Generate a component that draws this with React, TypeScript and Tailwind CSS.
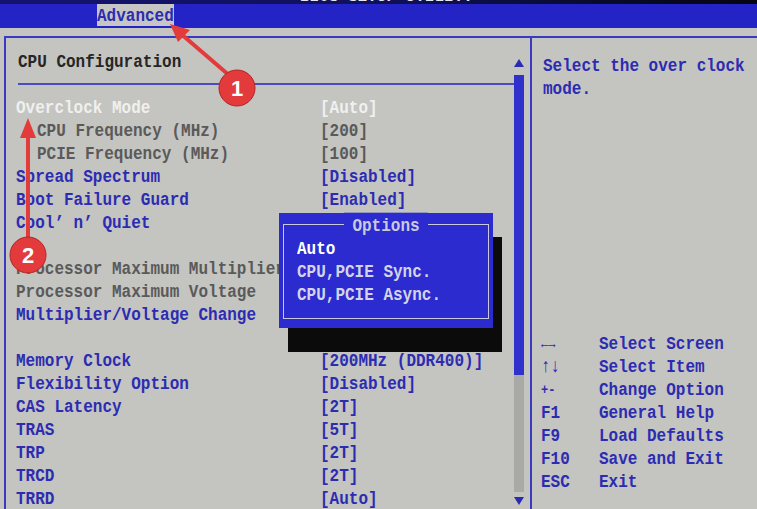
import React from "react";

type Tone = "hi" | "dim" | "blue" | "blank";

type Row = {
  label?: string;
  value?: string;
  tone: Tone;
  indent?: boolean;
};

const rows: Row[] = [
  { label: "Overclock Mode", value: "[Auto]", tone: "hi" },
  { label: "CPU Frequency (MHz)", value: "[200]", tone: "dim", indent: true },
  { label: "PCIE Frequency (MHz)", value: "[100]", tone: "dim", indent: true },
  { label: "Spread Spectrum", value: "[Disabled]", tone: "blue" },
  { label: "Boot Failure Guard", value: "[Enabled]", tone: "blue" },
  { label: "Cool\u2019 n\u2019 Quiet", tone: "blue" },
  { tone: "blank" },
  { label: "Processor Maximum Multiplier", tone: "dim" },
  { label: "Processor Maximum Voltage", tone: "dim" },
  { label: "Multiplier/Voltage Change", tone: "blue" },
  { tone: "blank" },
  { label: "Memory Clock", value: "[200MHz (DDR400)]", tone: "blue" },
  { label: "Flexibility Option", value: "[Disabled]", tone: "blue" },
  { label: "CAS Latency", value: "[2T]", tone: "blue" },
  { label: "TRAS", value: "[5T]", tone: "blue" },
  { label: "TRP", value: "[2T]", tone: "blue" },
  { label: "TRCD", value: "[2T]", tone: "blue" },
  { label: "TRRD", value: "[Auto]", tone: "blue" },
];

const keys = [
  ["\u2190\u2192", "Select Screen", true],
  ["\u2191\u2193", "Select Item", false],
  ["+-", "Change Option", true],
  ["F1", "General Help", false],
  ["F9", "Load Defaults", false],
  ["F10", "Save and Exit", false],
  ["ESC", "Exit", false],
] as const;

const toneClass: Record<Tone, string> = {
  hi: "text-[#f0f0ee]",
  dim: "text-[#5a5a5a]",
  blue: "text-[#2c2cb2]",
  blank: "",
};

function Line({ children, className = "" }: { children?: React.ReactNode; className?: string }) {
  return (
    <div className={`h-[23px] leading-[23px] whitespace-nowrap scale-y-[1.2] ${className}`}>
      {children}
    </div>
  );
}

function SettingRow({ row }: { row: Row }) {
  if (row.tone === "blank") return <div className="h-[23px]" />;
  return (
    <div className={`grid grid-cols-[304px_1fr] ${toneClass[row.tone]}`}>
      <Line className={row.indent ? "pl-[21px]" : ""}>{row.label}</Line>
      <Line>{row.value}</Line>
    </div>
  );
}

function OptionsPopup() {
  return (
    <div className="absolute left-[279px] top-[213px] w-[214px] h-[115px] bg-[#2b2bd0] shadow-[9px_24px_0_0_#0b0b0b] px-[4px] pt-[11px]">
      <div className="relative h-[95px] border border-[#c9c9dc]">
        <div className="flex justify-center -mt-[10px]">
          <Line className="bg-[#2b2bd0] px-[8px] text-[#c9c9dc]">Options</Line>
        </div>
        <div className="pl-[13px] text-[#d4d4e6]">
          <Line className="font-extrabold text-white">Auto</Line>
          <Line>CPU,PCIE Sync.</Line>
          <Line>CPU,PCIE Async.</Line>
        </div>
      </div>
    </div>
  );
}

function Markers() {
  return (
    <svg className="absolute inset-0 pointer-events-none" width="757" height="509" viewBox="0 0 757 509">
      <g stroke="#e33b3b" strokeWidth="4" strokeLinecap="round">
        <line x1="230" y1="76" x2="180" y2="33" />
        <line x1="28" y1="240" x2="28" y2="134" />
      </g>
      <g fill="#e33b3b">
        <polygon points="170,24 190,30 178,42" />
        <polygon points="28,118 36,138 20,138" />
      </g>
      <g fill="#e33b3b" stroke="#b52424" strokeWidth="1">
        <circle cx="237" cy="88" r="18" />
        <circle cx="28" cy="255" r="18" />
      </g>
      <g fill="#ffffff" fontFamily="'Liberation Sans', Arial, sans-serif" fontWeight="700" fontSize="22" textAnchor="middle">
        <text x="237" y="96">1</text>
        <text x="28" y="263">2</text>
      </g>
    </svg>
  );
}

export default function App() {
  return (
    <div className="relative w-[757px] h-[509px] overflow-hidden bg-[#c4c4c1] text-[16px] font-bold font-['Liberation_Mono',monospace]">
      {/* title strip, mostly cropped off */}
      <div className="h-[4px] overflow-hidden bg-gradient-to-r from-[#141470] via-[#10105a] to-[#050510]">
        <div className="pl-[300px] -mt-[11px] leading-[16px] text-[#e8e8f0] whitespace-nowrap">BIOS SETUP UTILITY</div>
      </div>

      {/* menu bar */}
      <div className="h-[24px] bg-[#2424c6] flex">
        <div className="ml-[97px] w-[77px] h-[22px] bg-[#c6c6c4] text-[#2c2cb2]">
          <Line className="leading-[24px] h-[22px]">Advanced</Line>
        </div>
      </div>

      <div className="h-[8px]" />

      {/* main frame */}
      <div className="ml-[4px] h-[473px] border-l-2 border-t-2 border-[#3a3ac0] flex">
        <div className="w-[524px] flex">
          <div className="flex-1 pl-[10px]">
            <div className="pt-[13px] pl-[2px] text-[#262626]">
              <Line>CPU Configuration</Line>
            </div>
            <div className="mt-[9px] ml-[2px] h-[2px] bg-[#4b4bc4]" />
            <div className="mt-[12px]">
              {rows.map((r, i) => (
                <SettingRow key={i} row={r} />
              ))}
            </div>
          </div>

          {/* scrollbar */}
          <div className="w-[10px] flex flex-col items-center">
            <svg className="mt-[21px]" width="10" height="8" viewBox="0 0 10 8">
              <polygon points="5,0 10,8 0,8" fill="#2a2ab4" />
            </svg>
            <div className="mt-[8px] w-[10px] h-[300px] bg-[#3030cc]" />
            <div className="w-[10px] h-[117px] bg-[#a9a9a6]" />
            <svg className="mt-[5px]" width="10" height="8" viewBox="0 0 10 8">
              <polygon points="0,0 10,0 5,8" fill="#2a2ab4" />
            </svg>
          </div>
          <div className="w-[6px]" />
        </div>

        {/* help column */}
        <div className="flex-1 border-l-2 border-[#3a3ac0] flex flex-col justify-between pb-[15px] text-[#2c2cb2]">
          <div className="pt-[17px] pl-[11px]">
            <Line>Select the over clock</Line>
            <Line>mode.</Line>
          </div>
          <div className="pl-[9px]">
            {keys.map(([k, d, small]) => (
              <div key={d} className="grid grid-cols-[58px_1fr]">
                <Line className={small ? "text-[12px]" : ""}>{k}</Line>
                <Line>{d}</Line>
              </div>
            ))}
          </div>
        </div>
      </div>

      <OptionsPopup />
      <Markers />
    </div>
  );
}
